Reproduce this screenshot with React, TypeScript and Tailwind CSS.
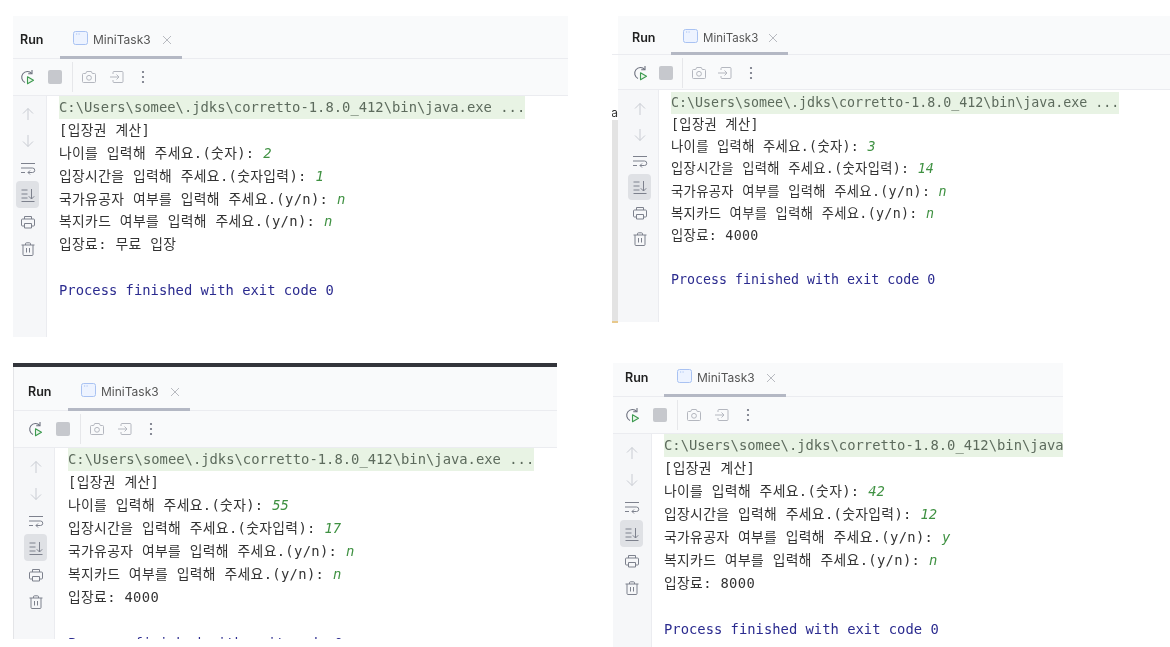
import React from 'react';

const mono = "font-['DejaVu_Sans_Mono','Noto_Sans_CJK_KR',monospace]";

type IconProps = { className?: string };

const Svg = ({ className, children }: IconProps & { children: React.ReactNode }) => (
  <svg viewBox="0 0 16 16" fill="none" stroke="currentColor" strokeWidth="1" className={`h-4 w-4 shrink-0 ${className || ''}`}>
    {children}
  </svg>
);

const RerunIcon = () => (
  <svg viewBox="0 0 16 16" fill="none" className="h-4 w-4 shrink-0">
    <path d="M12.8 4.6A5.7 5.7 0 1 0 6 13.4" stroke="#6c707e" strokeWidth="1.1" />
    <path d="M13 1v3.8H9.2" stroke="#6c707e" strokeWidth="1.1" />
    <path d="M8.5 7.8v7l6-3.5z" fill="#eaf6ea" stroke="#3d9a50" strokeWidth="1.1" strokeLinejoin="round" />
  </svg>
);

const CameraIcon = () => (
  <Svg className="text-[#b4b7bf]">
    <path d="M1.5 5.5a1 1 0 0 1 1-1h2.2l1-2h4.6l1 2h2.2a1 1 0 0 1 1 1v7a1 1 0 0 1-1 1h-11a1 1 0 0 1-1-1z" />
    <circle cx="8" cy="8.8" r="2.4" />
  </Svg>
);

const ImportIcon = () => (
  <Svg className="text-[#b4b7bf]">
    <path d="M4 5V3.5a1 1 0 0 1 1-1h8a1 1 0 0 1 1 1v9a1 1 0 0 1-1 1H5a1 1 0 0 1-1-1V11" />
    <path d="M1 8h9M7.5 5.5 10 8l-2.5 2.5" />
  </Svg>
);

const DotsIcon = ({ className }: IconProps) => (
  <svg viewBox="0 0 16 16" fill="#6c707e" className={`h-4 w-4 shrink-0 ${className || ''}`}>
    <circle cx="8" cy="3" r="1.1" />
    <circle cx="8" cy="8" r="1.1" />
    <circle cx="8" cy="13" r="1.1" />
  </svg>
);

const CloseIcon = ({ className }: IconProps) => (
  <svg viewBox="0 0 10 10" fill="none" stroke="#b8bac0" strokeWidth="1" className={`mb-[2px] h-[10px] w-[10px] shrink-0 ${className || ''}`}>
    <path d="M1 1l8 8M9 1l-8 8" />
  </svg>
);

const UpIcon = () => (
  <Svg className="text-[#c9ccd3]">
    <path d="M8 14V2.5M3 7.5l5-5 5 5" />
  </Svg>
);

const DownIcon = () => (
  <Svg className="text-[#c9ccd3]">
    <path d="M8 2v11.5M3 8.5l5 5 5-5" />
  </Svg>
);

const WrapIcon = () => (
  <Svg className="text-[#7d818d]">
    <path d="M1 3.5h14M1 8h11.5a2.2 2.2 0 0 1 0 4.5H8M10 10.5l-2 2 2 2M1 12.5h4" />
  </Svg>
);

const ScrollEndIcon = () => (
  <Svg className="text-[#7d818d]">
    <path d="M1.5 3h6M1.5 7h6M1.5 11h6M1.5 14.5h13M11.5 2v10M8.8 9.3l2.7 2.7 2.7-2.7" />
  </Svg>
);

const PrintIcon = () => (
  <Svg className="text-[#7d818d]">
    <path d="M4.5 5V2.5h7V5M4.5 12H2.5a1 1 0 0 1-1-1V6a1 1 0 0 1 1-1h11a1 1 0 0 1 1 1v5a1 1 0 0 1-1 1h-2" />
    <path d="M4.5 9.5h7v4.5h-7z" />
  </Svg>
);

const TrashIcon = () => (
  <Svg className="text-[#7d818d]">
    <path d="M1.5 4h13M5.5 4V2.8a1 1 0 0 1 1-1h3a1 1 0 0 1 1 1V4M3 4v9.5a1 1 0 0 0 1 1h8a1 1 0 0 0 1-1V4M6.5 7v4.5M9.5 7v4.5" />
  </Svg>
);

const TabIcon = () => (
  <svg viewBox="0 0 15 14" fill="none" className="mb-[2px] h-[14px] w-[15px] shrink-0">
    <rect x="0.5" y="0.5" width="14" height="13" rx="2" fill="#edf3ff" stroke="#a9c2f2" />
    <path d="M3 3h1.2M5.5 3h1.2" stroke="#a9c2f2" />
  </svg>
);

type Line = { text?: string; input?: string; kind?: 'cmd' | 'exit' };

type PanelConfig = {
  box: string;
  headerPad: string;
  runWidth: string;
  runBottom: string;
  tabWidth: string;
  tabBottom: string;
  closeMargin: string;
  header: string;
  toolbar: string;
  toolbarHeight: string;
  toolbarGap: string;
  stopMargin: string;
  sepMargin: string;
  dotsMargin: string;
  gutter: string;
  gutterTop: string;
  iconRow: string;
  consolePad: string;
  font: string;
  lineHeight: string;
  tabText: string;
  lines: Line[];
};

const makeLines = (age: string, time: string, merit: string, card: string, fee: string): Line[] => [
  { text: 'C:\\Users\\somee\\.jdks\\corretto-1.8.0_412\\bin\\java.exe ...', kind: 'cmd' },
  { text: '[입장권 계산]' },
  { text: '나이를 입력해 주세요.(숫자): ', input: age },
  { text: '입장시간을 입력해 주세요.(숫자입력): ', input: time },
  { text: '국가유공자 여부를 입력해 주세요.(y/n): ', input: merit },
  { text: '복지카드 여부를 입력해 주세요.(y/n): ', input: card },
  { text: `입장료: ${fee}` },
  { text: ' ' },
  { text: 'Process finished with exit code 0', kind: 'exit' },
];

function Panel({ p }: { p: PanelConfig }) {
  const rows = [
    <UpIcon key="up" />,
    <DownIcon key="down" />,
    <WrapIcon key="wrap" />,
    <ScrollEndIcon key="end" />,
    <PrintIcon key="print" />,
    <TrashIcon key="trash" />,
  ];

  return (
    <div className={`flex shrink-0 flex-col overflow-hidden bg-white ${p.box}`}>
      {/* tab strip */}
      <div className={`flex shrink-0 border-b border-[#ebecf0] bg-[#f9fafb] ${p.header} ${p.headerPad}`}>
        <span className={`self-end font-['Inter',sans-serif] text-[12.5px] font-semibold leading-[14px] text-[#222] ${p.runWidth} ${p.runBottom}`}>Run</span>
        <div className={`-mb-px flex items-end gap-[5px] border-b-[3px] border-[#b4b8c4] ${p.tabWidth} ${p.tabBottom}`}>
          <TabIcon />
          <span className={`font-['Inter',sans-serif] leading-[14px] text-[#555] ${p.tabText}`}>MiniTask3</span>
          <CloseIcon className={p.closeMargin} />
        </div>
      </div>

      {/* toolbar */}
      <div className={`flex shrink-0 items-center border-b border-[#ebecf0] bg-[#f9fafb] ${p.toolbarHeight} ${p.toolbar} ${p.toolbarGap}`}>
        <RerunIcon />
        <div className={`h-[14px] w-[14px] shrink-0 rounded-[2px] bg-[#c6c8cd] ${p.stopMargin}`} />
        <div className={`h-[30px] w-px shrink-0 bg-[#e6e7ea] ${p.sepMargin}`} />
        <CameraIcon />
        <ImportIcon />
        <DotsIcon className={p.dotsMargin} />
      </div>

      <div className="flex min-h-0 flex-1">
        {/* left gutter */}
        <div className={`flex shrink-0 flex-col border-r border-[#ebecf0] bg-[#f6f7f9] ${p.gutter} ${p.gutterTop}`}>
          {rows.map((icon, i) => (
            <div
              key={i}
              className={`flex w-[23px] shrink-0 items-center justify-center rounded-[4px] ${p.iconRow} ${i === 3 ? 'bg-[#dfe1e5]' : ''}`}
            >
              {icon}
            </div>
          ))}
        </div>

        {/* console output */}
        <div className={`min-w-0 flex-1 overflow-hidden whitespace-pre text-[#333] ${mono} ${p.consolePad} ${p.font} ${p.lineHeight}`}>
          {p.lines.map((line, i) => (
            <div key={i}>
              {line.kind === 'cmd' ? (
                <span className="inline-block bg-[#e8f3e4] text-[#5d6b5d]">{line.text}</span>
              ) : line.kind === 'exit' ? (
                <span className="text-[#2b2b8f]">{line.text}</span>
              ) : (
                <span className="tracking-[0.33px]">{line.text}</span>
              )}
              {line.input && <span className="italic text-[#3f9142]">{line.input}</span>}
            </div>
          ))}
        </div>
      </div>
    </div>
  );
}

const base = {
  tabText: 'text-[12px]',
  font: 'text-[13.83px]',
  lineHeight: 'leading-[23px]',
  iconRow: 'h-[27px]',
  toolbarHeight: 'h-[37px]',
  toolbarGap: 'gap-[12px]',
  stopMargin: 'ml-px',
  sepMargin: 'ml-[-2px] mr-[-4px]',
  dotsMargin: 'ml-[-2px]',
  tabWidth: 'w-[122px] pl-[13px]',
  tabBottom: 'pb-[9px]',
  runBottom: 'mb-[11px]',
  closeMargin: 'ml-[6px]',
};

const panels: Record<string, PanelConfig> = {
  first: {
    ...base,
    box: 'w-[555px] h-[321px]',
    header: 'h-[43px]',
    headerPad: 'pl-[7px]',
    runWidth: 'w-[40px]',
    toolbar: 'pl-[6px]',
    gutter: 'w-[34px] pl-[3px]',
    gutterTop: 'pt-[4px]',
    consolePad: 'pl-[12px]',
    lineHeight: 'leading-[22.875px]',
    lines: makeLines('2', '1', 'n', 'n', '무료 입장'),
  },
  second: {
    ...base,
    box: 'w-[552px] h-[306px]',
    header: 'h-[39px]',
    headerPad: 'pl-[14px]',
    runWidth: 'w-[39px]',
    runBottom: 'mb-[9px]',
    tabWidth: 'w-[117px] pl-[12px]',
    tabBottom: 'pb-[7px]',
    closeMargin: 'ml-[5px]',
    tabText: 'text-[11.5px]',
    toolbar: 'pl-[14px] pt-px',
    toolbarHeight: 'h-[35px]',
    toolbarGap: 'gap-[10px]',
    sepMargin: 'ml-[-1px] mr-[-2px]',
    dotsMargin: 'ml-0',
    gutter: 'w-[41px] pl-[10px]',
    gutterTop: 'pt-[6px]',
    iconRow: 'h-[26px]',
    consolePad: 'pl-[12px] pt-[2px]',
    font: 'text-[13.3px]',
    lineHeight: 'leading-[22.125px]',
    lines: makeLines('3', '14', 'n', 'n', '4000'),
  },
  third: {
    ...base,
    box: 'w-[544px] h-[272px] border-l border-[#e4e5e8]',
    header: 'h-[44px]',
    headerPad: 'pl-[14px]',
    runWidth: 'w-[40px]',
    toolbar: 'pl-[13px]',
    gutter: 'w-[41px] pl-[10px]',
    gutterTop: 'pt-[5px]',
    consolePad: 'pl-[13px]',
    lines: makeLines('55', '17', 'n', 'n', '4000'),
  },
  fourth: {
    ...base,
    box: 'w-[450px] h-[284px]',
    header: 'h-[34px]',
    headerPad: 'pl-[12px]',
    runWidth: 'w-[39px]',
    toolbar: 'pl-[11px]',
    gutter: 'w-[39px] pl-[7px]',
    gutterTop: 'pt-[5px]',
    consolePad: 'pl-[12px]',
    lines: makeLines('42', '12', 'y', 'n', '8000'),
  },
};

export default function App() {
  return (
    <div className="h-[647px] w-[1170px] overflow-hidden bg-white blur-[0.3px]">
      {/* top row of screenshots */}
      <div className="flex h-[363px] items-start pt-[16px]">
        <div className="ml-[13px]">
          <Panel p={panels.first} />
        </div>
        <div className="ml-[44px] mt-[38px] flex h-[269px] w-[6px] shrink-0 flex-col border-t border-[#ebecf0]">
          <div className="mt-[51px] flex h-[14px] justify-end overflow-hidden whitespace-nowrap font-['Inter',sans-serif] text-[12px] leading-[14px] text-[#333]">na</div>
          <div className="flex-1 border-b-2 border-[#e8c98c] bg-[#e3e3e3]" />
        </div>
        <Panel p={panels.second} />
      </div>

      {/* bottom row of screenshots */}
      <div className="flex items-start">
        <div className="ml-[13px] w-[544px] shrink-0 border-t-[4px] border-[#33353b]">
          <Panel p={panels.third} />
        </div>
        <div className="ml-[56px]">
          <Panel p={panels.fourth} />
        </div>
      </div>
    </div>
  );
}
